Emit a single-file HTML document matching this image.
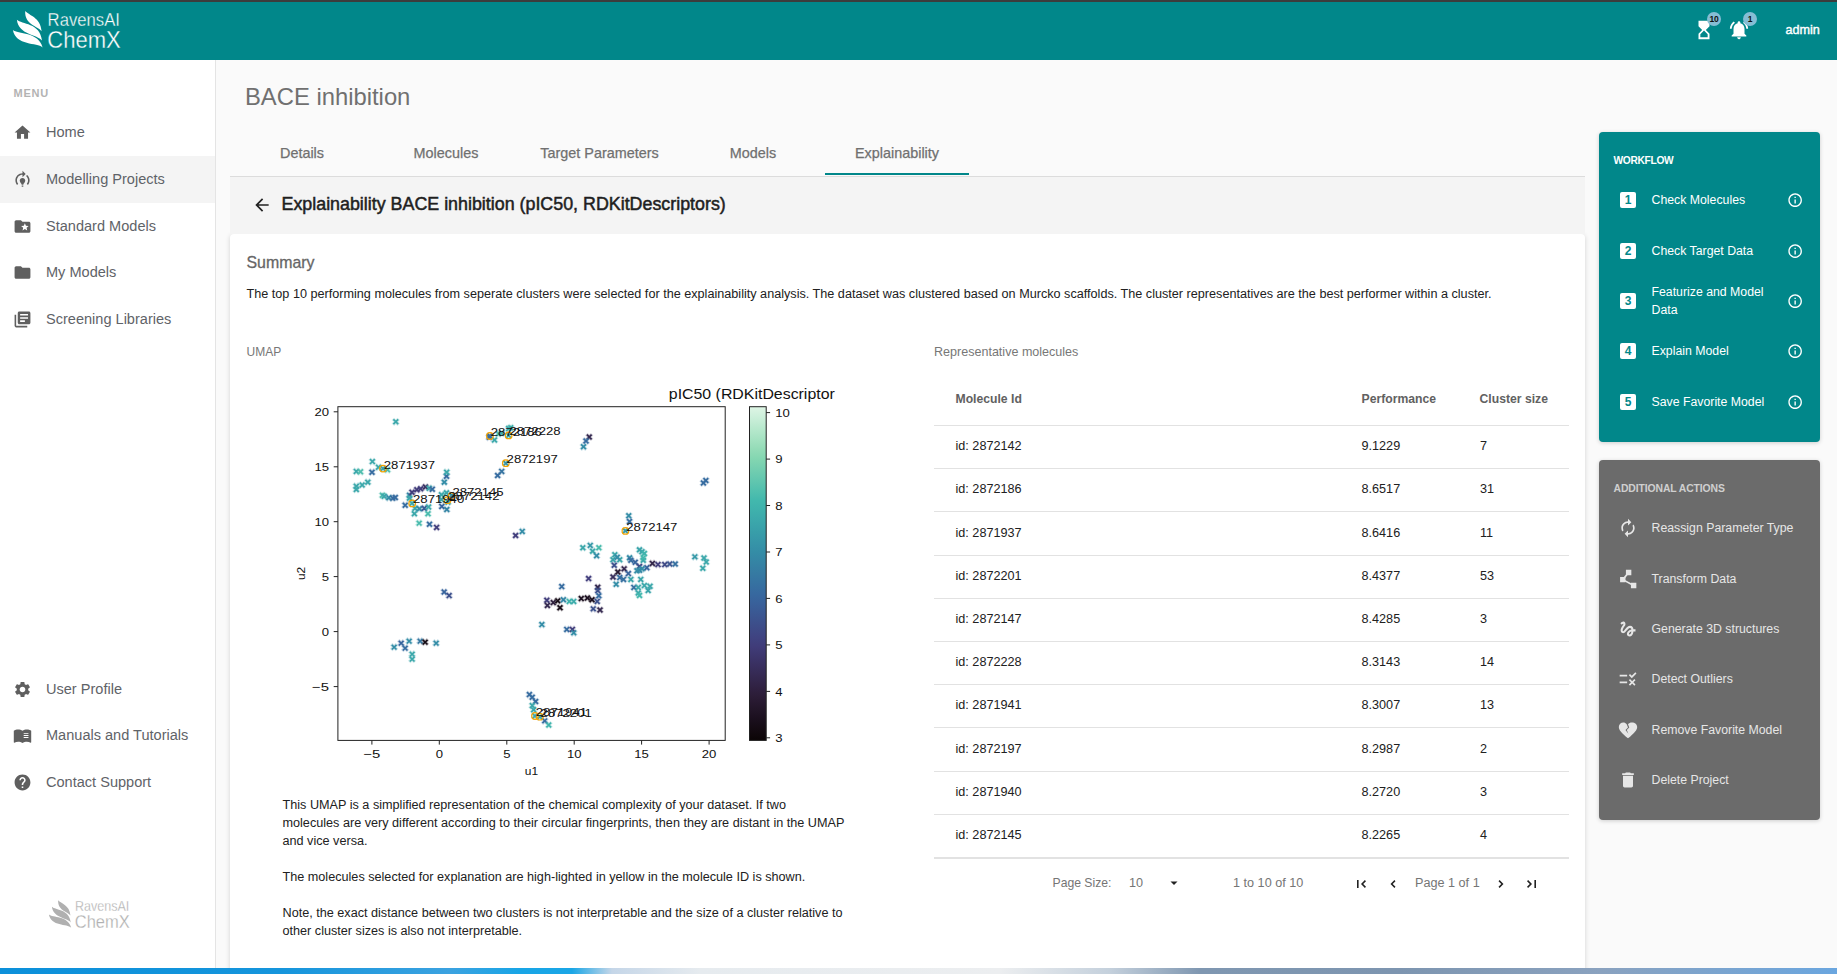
<!DOCTYPE html>
<html><head><meta charset="utf-8">
<style>
*{box-sizing:border-box;margin:0;padding:0}
html,body{width:1837px;height:974px;overflow:hidden;background:#fafafa;font-family:"Liberation Sans",sans-serif;position:relative}
.a{position:absolute;white-space:nowrap}
#topline{left:0;top:0;width:1837px;height:2px;background:#3c3c3c}
#header{left:0;top:2px;width:1837px;height:58px;background:#01878a}
#sidebar{left:0;top:60px;width:216px;height:908px;background:#fff;border-right:1px solid #e4e4e4}
.nav{left:0;width:215px;height:47px}
.nav .t{position:absolute;left:46px;top:0;line-height:47px;font-size:14.55px;color:#5f6368}
.nav svg{position:absolute;left:13px;top:14px;width:19px;height:19px;fill:#5f5f5f}
.tab{top:133px;height:42px;line-height:40px;font-size:14.4px;color:#707070;-webkit-text-stroke:0.25px #707070;text-align:center}
#card{left:230px;top:234px;width:1355px;height:760px;background:#fff;border-radius:4px 4px 0 0;box-shadow:0 1px 5px rgba(0,0,0,.16)}
#cardhead{left:230px;top:177px;width:1355px;height:57px;background:#f4f4f4}
.p{font-size:12.65px;color:#212121}
.th{font-size:12.2px;color:#616161;font-weight:bold}
.td{font-size:12.65px;color:#212121}
.hl{left:934px;width:635px;height:1px;background:#e2e2e2}
#wf{left:1599px;top:132px;width:221px;height:310px;background:#01878a;border-radius:4px;box-shadow:0 1px 4px rgba(0,0,0,.18)}
#aa{left:1599px;top:460px;width:221px;height:360px;background:#6b6b6b;border-radius:4px;box-shadow:0 1px 4px rgba(0,0,0,.18)}
.wft{font-size:12.3px;color:#fff}
.aat{font-size:12.3px;color:#e6e6e6}
.ic{position:absolute}
#bottombar{left:0;top:968px;width:1837px;height:6px;background:linear-gradient(90deg,#0c90da 0px,#1595dc 280px,#3ba2e0 450px,#18a5e6 520px,#1aa6e6 572px,#c5d6e8 612px,#e6ebef 700px,#eceef0 1000px,#c4d0dc 1110px,#7f97b1 1200px,#7d95b0 1400px,#8aa2bf 1600px,#6aa6df 1837px)}
</style></head><body>
<div class="a" id="topline"></div>
<div class="a" id="header"></div>
<div class="a" id="sidebar"></div>
<!--HDR-->
<svg class="a" style="left:0;top:0" width="140" height="60" viewBox="0 0 140 60"><g fill="#fff" stroke="#01878a" stroke-width="0"><g id="lg">
<path d="M25.2 10.9 C29 15.5, 40.5 17, 41.6 31.2 C37.5 25.5, 24.5 25, 25.2 10.9 Z"/>
<path d="M16.9 19.8 C21.5 24.5, 40 22.5, 42 40.6 C37.5 34.5, 18.5 35, 16.9 19.8 Z"/>
<path d="M12.9 30.1 C17.5 34.5, 38.5 31.5, 42.6 47.5 C37.5 42.5, 15.5 46, 12.9 30.1 Z"/>
<text stroke-width="0.35" x="47.6" y="25.5" font-size="19.2" textLength="72.4" lengthAdjust="spacingAndGlyphs" font-family="Liberation Sans">RavensAI</text>
<text stroke-width="0.35" x="47.3" y="47.6" font-size="24" textLength="73.5" lengthAdjust="spacingAndGlyphs" font-family="Liberation Sans">ChemX</text>
</g></g></svg>
<svg class="a" style="left:0;top:880px" width="215" height="60" viewBox="0 880 215 60"><g fill="#b0b0b0" stroke="#fff" stroke-width="0" transform="translate(39.25 892) scale(.75)"><g >
<path d="M25.2 10.9 C29 15.5, 40.5 17, 41.6 31.2 C37.5 25.5, 24.5 25, 25.2 10.9 Z"/>
<path d="M16.9 19.8 C21.5 24.5, 40 22.5, 42 40.6 C37.5 34.5, 18.5 35, 16.9 19.8 Z"/>
<path d="M12.9 30.1 C17.5 34.5, 38.5 31.5, 42.6 47.5 C37.5 42.5, 15.5 46, 12.9 30.1 Z"/>
<text stroke-width="0.35" x="47.6" y="25.5" font-size="19.2" textLength="72.4" lengthAdjust="spacingAndGlyphs" font-family="Liberation Sans">RavensAI</text>
<text stroke-width="0.35" x="47.3" y="47.6" font-size="24" textLength="73.5" lengthAdjust="spacingAndGlyphs" font-family="Liberation Sans">ChemX</text>
</g></g></svg>
<svg class="a" style="left:1692.5px;top:19px" width="22" height="22" viewBox="0 0 24 24" fill="#fff"><path d="M6 2l.01 6L10 12l-3.99 4.01L6 22h12v-6l-4-4 4-3.99V2H6zm10 14.5V20H8v-3.5l4-4 4 4z"/></svg>
<div class="a" style="left:1707px;top:12px;width:14px;height:14px;border-radius:7px;background:#86bdd4;color:#111;font-size:8.5px;font-weight:bold;text-align:center;line-height:14px;letter-spacing:-0.3px">10</div>
<svg class="a" style="left:1728px;top:19px" width="22" height="22" viewBox="0 0 24 24" fill="#fff"><path d="M7.58 4.08L6.15 2.65C3.75 4.48 2.17 7.3 2.03 10.5h2c.15-2.65 1.51-4.97 3.55-6.42zm12.39 6.42h2c-.15-3.2-1.73-6.02-4.12-7.85l-1.42 1.43c2.02 1.45 3.39 3.77 3.54 6.42zM18 11c0-3.07-1.64-5.64-4.5-6.32V4c0-.83-.67-1.5-1.5-1.5s-1.5.67-1.5 1.5v.68C7.63 5.36 6 7.92 6 11v5l-2 2v1h16v-1l-2-2v-5zm-6 11c.14 0 .27-.01.4-.04.65-.14 1.18-.58 1.44-1.18.1-.24.15-.5.15-.78h-4c.01 1.1.9 2 2.01 2z"/></svg>
<div class="a" style="left:1743px;top:12px;width:14px;height:14px;border-radius:7px;background:#86bdd4;color:#111;font-size:8.5px;font-weight:bold;text-align:center;line-height:14px">1</div>
<div class="a" style="left:1785.5px;top:22px;font-size:12.6px;color:#fff;line-height:16px;-webkit-text-stroke:0.4px #fff">admin</div>
<!--/HDR-->


<!-- sidebar -->
<div class="a" style="left:13.5px;top:86px;font-size:11px;font-weight:bold;color:#b3b3b3;letter-spacing:0.75px;line-height:14px">MENU</div>
<div class="a nav" style="top:108.5px"><svg viewBox="0 0 24 24"><path d="M10 20v-6h4v6h5v-8h3L12 3 2 12h3v8z"/></svg><span class="t">Home</span></div>
<div class="a nav" style="top:156px;background:#f4f4f4"><svg viewBox="0 0 24 24"><path d="M15.5 13.5c0 2-2.5 3.5-2.5 5h-2c0-1.5-2.5-3-2.5-5 0-1.93 1.57-3.5 3.5-3.5s3.5 1.57 3.5 3.5zM13 19.5h-2V21h2v-1.5zm6-6.5c0 1.68-.59 3.21-1.58 4.42l1.42 1.420C20.18 17.27 21 15.23 21 13c0-2.74-1.230-5.19-3.16-6.84l-1.42 1.42C17.99 8.86 19 10.82 19 13zm-3-8l-4-4v3c-4.97 0-9 4.03-9 9 0 2.23.82 4.27 2.16 5.84l1.42-1.42C5.59 16.21 5 14.68 5 13c0-3.86 3.14-7 7-7v3l4-4z"/></svg><span class="t">Modelling Projects</span></div>
<div class="a nav" style="top:203px"><svg viewBox="0 0 24 24"><path d="M20 6h-8l-2-2H4c-1.1 0-2 .9-2 2v12c0 1.1.9 2 2 2h16c1.1 0 2-.9 2-2V8c0-1.1-.9-2-2-2zm-2.06 11L15 15.28 12.06 17l.78-3.33-2.59-2.24 3.41-.29L15 8l1.34 3.14 3.41.29-2.59 2.24.78 3.33z"/></svg><span class="t">Standard Models</span></div>
<div class="a nav" style="top:249px"><svg viewBox="0 0 24 24"><path d="M10 4H4c-1.1 0-1.99.9-1.990 2L2 18c0 1.1.9 2 2 2h16c1.1 0 2-.9 2-2V8c0-1.1-.9-2-2-2h-8l-2-2z"/></svg><span class="t">My Models</span></div>
<div class="a nav" style="top:296px"><svg viewBox="0 0 24 24"><path d="M4 6H2v14c0 1.1.9 2 2 2h14v-2H4V6zm16-4H8c-1.1 0-2 .9-2 2v12c0 1.1.9 2 2 2h12c1.1 0 2-.9 2-2V4c0-1.1-.9-2-2-2zm-1 9H9V9h10v2zm-4 4H9v-2h6v2zm4-8H9V5h10v2z"/></svg><span class="t">Screening Libraries</span></div>

<div class="a nav" style="top:666px"><svg viewBox="0 0 24 24"><path d="M19.14 12.94c.04-.3.06-.61.06-.94 0-.32-.02-.64-.07-.94l2.03-1.58c.18-.14.23-.41.12-.61l-1.92-3.32c-.12-.22-.37-.29-.59-.22l-2.39.96c-.5-.38-1.03-.7-1.62-.94l-.36-2.54c-.04-.24-.24-.41-.48-.41h-3.84c-.24 0-.43.17-.47.41l-.36 2.54c-.59.24-1.13.57-1.62.94l-2.39-.96c-.22-.08-.47 0-.59.22L2.74 8.87c-.12.21-.08.47.12.61l2.03 1.58c-.05.3-.09.63-.09.94s.02.64.07.94l-2.03 1.580c-.18.14-.23.41-.12.61l1.92 3.32c.12.22.37.29.59.22l2.39-.96c.5.38 1.03.7 1.62.94l.36 2.54c.05.24.24.41.48.41h3.84c.24 0 .44-.17.47-.41l.36-2.54c.59-.24 1.13-.56 1.62-.94l2.39.96c.22.08.47 0 .59-.22l1.92-3.32c.12-.22.07-.47-.12-.61l-2.01-1.58zM12 15.6c-1.98 0-3.6-1.62-3.6-3.6s1.62-3.6 3.6-3.6 3.6 1.62 3.6 3.6-1.62 3.6-3.6 3.6z"/></svg><span class="t">User Profile</span></div>
<div class="a nav" style="top:712px"><svg viewBox="0 0 24 24"><path d="M21 5c-1.11-.35-2.33-.5-3.5-.5-1.95 0-4.05.4-5.5 1.5-1.45-1.1-3.55-1.5-5.5-1.5S2.45 4.9 1 6v14.65c0 .25.25.5.5.5.1 0 .15-.05.25-.05C3.1 20.45 5.05 20 6.5 20c1.95 0 4.05.4 5.5 1.5 1.350-.85 3.8-1.5 5.5-1.5 1.65 0 3.35.3 4.75 1.05.1.05.15.05.25.05.25 0 .5-.25.5-.5V6c-.6-.45-1.25-.75-2-1z"/><path fill="#fff" d="M13.5 9h6v1h-6zM13.5 11.5h6v1h-6zM13.5 14h6v1h-6z"/></svg><span class="t">Manuals and Tutorials</span></div>
<div class="a nav" style="top:759px"><svg viewBox="0 0 24 24"><path d="M12 2C6.48 2 2 6.48 2 12s4.48 10 10 10 10-4.48 10-10S17.52 2 12 2zm1 17h-2v-2h2v2zm2.07-7.75l-.9.92C13.45 12.9 13 13.5 13 15h-2v-.5c0-1.1.45-2.1 1.170-2.83l1.24-1.26c.37-.36.59-.86.59-1.41 0-1.1-.9-2-2-2s-2 .9-2 2H8c0-2.21 1.79-4 4-4s4 1.79 4 4c0 .88-.36 1.68-.93 2.25z"/></svg><span class="t">Contact Support</span></div>

<!-- main -->
<div class="a" style="left:245px;top:82px;font-size:23.8px;color:#707070;line-height:30px">BACE inhibition</div>
<div class="a" style="left:230px;top:176px;width:1355px;height:1px;background:#dcdcdc"></div>
<div class="a tab" style="left:230px;width:144px">Details</div>
<div class="a tab" style="left:374px;width:144px">Molecules</div>
<div class="a tab" style="left:518px;width:163px">Target Parameters</div>
<div class="a tab" style="left:681px;width:144px">Models</div>
<div class="a tab" style="left:825px;width:144px">Explainability</div>
<div class="a" style="left:825px;top:173px;width:144px;height:2px;background:#01878a"></div>

<div class="a" id="card"></div>
<div class="a" id="cardhead"></div>
<div class="a" style="left:281.5px;top:193px;font-size:17.85px;color:#1f1f1f;-webkit-text-stroke:0.5px #1f1f1f;line-height:22px">Explainability BACE inhibition (pIC50, RDKitDescriptors)</div>
<svg class="a" style="left:252px;top:195px" width="20" height="20" viewBox="0 0 24 24"><path fill="#222" d="M20 11H7.83l5.59-5.59L12 4l-8 8 8 8 1.41-1.41L7.83 13H20v-2z"/></svg>

<div class="a" style="left:246.5px;top:253px;font-size:15.9px;color:#666;-webkit-text-stroke:0.3px #666;line-height:20px">Summary</div>
<div class="a p" style="left:246.5px;top:286px;line-height:16px">The top 10 performing molecules from seperate clusters were selected for the explainability analysis. The dataset was clustered based on Murcko scaffolds. The cluster representatives are the best performer within a cluster.</div>
<div class="a" style="left:246.5px;top:344px;font-size:12px;color:#777;line-height:16px">UMAP</div>
<div class="a" style="left:934px;top:344px;font-size:12.55px;color:#777;line-height:16px">Representative molecules</div>

<!--PLOT-->
<svg class="a" style="left:0;top:0" width="1837" height="974" viewBox="0 0 1837 974" font-family="Liberation Sans">
<g fill="none"><path d="M392.9 418.9L398.7 424.7M392.9 424.7L398.7 418.9" stroke="#3ca8ab" stroke-width="3.4" opacity="0.25"/><path d="M393.4 419.4L398.2 424.2M393.4 424.2L398.2 419.4" stroke="#3ca8ab" stroke-width="1.75"/><path d="M369.5 458.8L375.2 464.5M369.5 464.5L375.2 458.8" stroke="#3ca8ab" stroke-width="3.4" opacity="0.25"/><path d="M370.0 459.2L374.8 464.0M370.0 464.0L374.8 459.2" stroke="#3ca8ab" stroke-width="1.75"/><path d="M353.4 468.5L359.2 474.2M353.4 474.2L359.2 468.5" stroke="#3ca8ab" stroke-width="3.4" opacity="0.25"/><path d="M353.9 469.0L358.7 473.8M353.9 473.8L358.7 469.0" stroke="#3ca8ab" stroke-width="1.75"/><path d="M357.6 468.9L363.4 474.7M357.6 474.7L363.4 468.9" stroke="#50beae" stroke-width="3.4" opacity="0.25"/><path d="M358.1 469.4L362.9 474.2M358.1 474.2L362.9 469.4" stroke="#50beae" stroke-width="1.75"/><path d="M369.1 469.3L374.9 475.1M369.1 475.1L374.9 469.3" stroke="#366ca0" stroke-width="3.4" opacity="0.25"/><path d="M369.6 469.8L374.4 474.6M369.6 474.6L374.4 469.8" stroke="#366ca0" stroke-width="1.75"/><path d="M375.6 464.4L381.4 470.2M375.6 470.2L381.4 464.4" stroke="#3ca8ab" stroke-width="3.4" opacity="0.25"/><path d="M376.1 464.9L380.9 469.7M376.1 469.7L380.9 464.9" stroke="#3ca8ab" stroke-width="1.75"/><path d="M384.6 466.9L390.4 472.7M384.6 472.7L390.4 466.9" stroke="#50beae" stroke-width="3.4" opacity="0.25"/><path d="M385.1 467.4L389.9 472.2M385.1 472.2L389.9 467.4" stroke="#50beae" stroke-width="1.75"/><path d="M380.1 465.8L385.9 471.5M380.1 471.5L385.9 465.8" stroke="#39a0aa" stroke-width="3.4" opacity="0.25"/><path d="M380.6 466.2L385.4 471.0M380.6 471.0L385.4 466.2" stroke="#39a0aa" stroke-width="1.75"/><path d="M353.4 483.3L359.2 489.1M353.4 489.1L359.2 483.3" stroke="#3ca8ab" stroke-width="3.4" opacity="0.25"/><path d="M353.9 483.8L358.7 488.6M353.9 488.6L358.7 483.8" stroke="#3ca8ab" stroke-width="1.75"/><path d="M353.4 486.6L359.2 492.4M353.4 492.4L359.2 486.6" stroke="#3ca8ab" stroke-width="3.4" opacity="0.25"/><path d="M353.9 487.1L358.7 491.9M353.9 491.9L358.7 487.1" stroke="#3ca8ab" stroke-width="1.75"/><path d="M359.2 482.1L365.0 487.9M359.2 487.9L365.0 482.1" stroke="#3ca8ab" stroke-width="3.4" opacity="0.25"/><path d="M359.8 482.6L364.5 487.4M359.8 487.4L364.5 482.6" stroke="#3ca8ab" stroke-width="1.75"/><path d="M364.9 479.2L370.7 485.0M364.9 485.0L370.7 479.2" stroke="#3ca8ab" stroke-width="3.4" opacity="0.25"/><path d="M365.4 479.8L370.2 484.5M365.4 484.5L370.2 479.8" stroke="#3ca8ab" stroke-width="1.75"/><path d="M379.5 492.4L385.2 498.2M379.5 498.2L385.2 492.4" stroke="#50beae" stroke-width="3.4" opacity="0.25"/><path d="M380.0 492.9L384.8 497.7M380.0 497.7L384.8 492.9" stroke="#50beae" stroke-width="1.75"/><path d="M381.3 493.4L387.1 499.2M381.3 499.2L387.1 493.4" stroke="#3ca8ab" stroke-width="3.4" opacity="0.25"/><path d="M381.8 493.9L386.6 498.7M381.8 498.7L386.6 493.9" stroke="#3ca8ab" stroke-width="1.75"/><path d="M386.0 494.9L391.8 500.7M386.0 500.7L391.8 494.9" stroke="#348da7" stroke-width="3.4" opacity="0.25"/><path d="M386.5 495.4L391.2 500.2M386.5 500.2L391.2 495.4" stroke="#348da7" stroke-width="1.75"/><path d="M390.0 495.2L395.8 501.0M390.0 501.0L395.8 495.2" stroke="#366ca0" stroke-width="3.4" opacity="0.25"/><path d="M390.5 495.8L395.2 500.5M390.5 500.5L395.2 495.8" stroke="#366ca0" stroke-width="1.75"/><path d="M392.4 494.6L398.2 500.4M392.4 500.4L398.2 494.6" stroke="#366ca0" stroke-width="3.4" opacity="0.25"/><path d="M392.9 495.1L397.7 499.9M392.9 499.9L397.7 495.1" stroke="#366ca0" stroke-width="1.75"/><path d="M406.6 492.4L412.4 498.2M406.6 498.2L412.4 492.4" stroke="#3585a5" stroke-width="3.4" opacity="0.25"/><path d="M407.1 492.9L411.9 497.7M407.1 497.7L411.9 492.9" stroke="#3585a5" stroke-width="1.75"/><path d="M406.6 495.2L412.4 501.0M406.6 501.0L412.4 495.2" stroke="#3ca8ab" stroke-width="3.4" opacity="0.25"/><path d="M407.1 495.8L411.9 500.5M407.1 500.5L411.9 495.8" stroke="#3ca8ab" stroke-width="1.75"/><path d="M409.1 489.4L414.9 495.2M409.1 495.2L414.9 489.4" stroke="#413d7b" stroke-width="3.4" opacity="0.25"/><path d="M409.6 489.9L414.4 494.7M409.6 494.7L414.4 489.9" stroke="#413d7b" stroke-width="1.75"/><path d="M414.0 486.9L419.8 492.7M414.0 492.7L419.8 486.9" stroke="#413d7b" stroke-width="3.4" opacity="0.25"/><path d="M414.5 487.4L419.2 492.2M414.5 492.2L419.2 487.4" stroke="#413d7b" stroke-width="1.75"/><path d="M417.8 486.0L423.5 491.8M417.8 491.8L423.5 486.0" stroke="#413d7b" stroke-width="3.4" opacity="0.25"/><path d="M418.2 486.5L423.0 491.2M418.2 491.2L423.0 486.5" stroke="#413d7b" stroke-width="1.75"/><path d="M422.6 484.1L428.4 489.9M422.6 489.9L428.4 484.1" stroke="#3a3162" stroke-width="3.4" opacity="0.25"/><path d="M423.1 484.6L427.9 489.4M423.1 489.4L427.9 484.6" stroke="#3a3162" stroke-width="1.75"/><path d="M426.3 485.3L432.1 491.1M426.3 491.1L432.1 485.3" stroke="#3ca8ab" stroke-width="3.4" opacity="0.25"/><path d="M426.8 485.8L431.6 490.6M426.8 490.6L431.6 485.8" stroke="#3ca8ab" stroke-width="1.75"/><path d="M429.4 486.3L435.2 492.1M429.4 492.1L435.2 486.3" stroke="#366ca0" stroke-width="3.4" opacity="0.25"/><path d="M429.9 486.8L434.7 491.6M429.9 491.6L434.7 486.8" stroke="#366ca0" stroke-width="1.75"/><path d="M402.3 502.3L408.1 508.1M402.3 508.1L408.1 502.3" stroke="#366ca0" stroke-width="3.4" opacity="0.25"/><path d="M402.8 502.8L407.6 507.6M402.8 507.6L407.6 502.8" stroke="#366ca0" stroke-width="1.75"/><path d="M409.1 500.4L414.9 506.2M409.1 506.2L414.9 500.4" stroke="#3ca8ab" stroke-width="3.4" opacity="0.25"/><path d="M409.6 500.9L414.4 505.7M409.6 505.7L414.4 500.9" stroke="#3ca8ab" stroke-width="1.75"/><path d="M412.1 505.4L417.9 511.2M412.1 511.2L417.9 505.4" stroke="#3ca8ab" stroke-width="3.4" opacity="0.25"/><path d="M412.6 505.9L417.4 510.7M412.6 510.7L417.4 505.9" stroke="#3ca8ab" stroke-width="1.75"/><path d="M416.5 506.0L422.2 511.8M416.5 511.8L422.2 506.0" stroke="#348da7" stroke-width="3.4" opacity="0.25"/><path d="M417.0 506.5L421.8 511.2M417.0 511.2L421.8 506.5" stroke="#348da7" stroke-width="1.75"/><path d="M421.4 505.4L427.2 511.2M421.4 511.2L427.2 505.4" stroke="#395c96" stroke-width="3.4" opacity="0.25"/><path d="M421.9 505.9L426.7 510.7M421.9 510.7L426.7 505.9" stroke="#395c96" stroke-width="1.75"/><path d="M425.8 504.1L431.5 509.9M425.8 509.9L431.5 504.1" stroke="#3ca8ab" stroke-width="3.4" opacity="0.25"/><path d="M426.2 504.6L431.0 509.4M426.2 509.4L431.0 504.6" stroke="#3ca8ab" stroke-width="1.75"/><path d="M411.5 510.9L417.2 516.6M411.5 516.6L417.2 510.9" stroke="#3ca8ab" stroke-width="3.4" opacity="0.25"/><path d="M412.0 511.4L416.8 516.1M412.0 516.1L416.8 511.4" stroke="#3ca8ab" stroke-width="1.75"/><path d="M425.1 510.9L430.9 516.6M425.1 516.6L430.9 510.9" stroke="#49bbad" stroke-width="3.4" opacity="0.25"/><path d="M425.6 511.4L430.4 516.1M425.6 516.1L430.4 511.4" stroke="#49bbad" stroke-width="1.75"/><path d="M416.2 520.2L422.0 526.0M416.2 526.0L422.0 520.2" stroke="#49bbad" stroke-width="3.4" opacity="0.25"/><path d="M416.8 520.8L421.5 525.5M416.8 525.5L421.5 520.8" stroke="#49bbad" stroke-width="1.75"/><path d="M426.6 521.4L432.4 527.1M426.6 527.1L432.4 521.4" stroke="#366ca0" stroke-width="3.4" opacity="0.25"/><path d="M427.1 521.9L431.9 526.6M427.1 526.6L431.9 521.9" stroke="#366ca0" stroke-width="1.75"/><path d="M433.8 524.5L439.5 530.2M433.8 530.2L439.5 524.5" stroke="#413d7b" stroke-width="3.4" opacity="0.25"/><path d="M434.2 525.0L439.0 529.8M434.2 529.8L439.0 525.0" stroke="#413d7b" stroke-width="1.75"/><path d="M441.4 479.2L447.2 485.0M441.4 485.0L447.2 479.2" stroke="#348da7" stroke-width="3.4" opacity="0.25"/><path d="M441.9 479.8L446.7 484.5M441.9 484.5L446.7 479.8" stroke="#348da7" stroke-width="1.75"/><path d="M443.6 473.3L449.4 479.1M443.6 479.1L449.4 473.3" stroke="#366ca0" stroke-width="3.4" opacity="0.25"/><path d="M444.1 473.8L448.9 478.6M444.1 478.6L448.9 473.8" stroke="#366ca0" stroke-width="1.75"/><path d="M443.8 469.3L449.6 475.1M443.8 475.1L449.6 469.3" stroke="#3ca8ab" stroke-width="3.4" opacity="0.25"/><path d="M444.3 469.8L449.1 474.6M444.3 474.6L449.1 469.8" stroke="#3ca8ab" stroke-width="1.75"/><path d="M443.6 490.0L449.4 495.8M443.6 495.8L449.4 490.0" stroke="#3ca8ab" stroke-width="3.4" opacity="0.25"/><path d="M444.1 490.5L448.9 495.2M444.1 495.2L448.9 490.5" stroke="#3ca8ab" stroke-width="1.75"/><path d="M438.6 491.8L444.4 497.6M438.6 497.6L444.4 491.8" stroke="#3ca8ab" stroke-width="3.4" opacity="0.25"/><path d="M439.1 492.3L443.9 497.1M439.1 497.1L443.9 492.3" stroke="#3ca8ab" stroke-width="1.75"/><path d="M438.6 496.8L444.4 502.5M438.6 502.5L444.4 496.8" stroke="#39a0aa" stroke-width="3.4" opacity="0.25"/><path d="M439.1 497.2L443.9 502.0M439.1 502.0L443.9 497.2" stroke="#39a0aa" stroke-width="1.75"/><path d="M448.8 492.4L454.6 498.2M448.8 498.2L454.6 492.4" stroke="#348da7" stroke-width="3.4" opacity="0.25"/><path d="M449.3 492.9L454.1 497.7M449.3 497.7L454.1 492.9" stroke="#348da7" stroke-width="1.75"/><path d="M445.1 499.2L450.9 505.0M445.1 505.0L450.9 499.2" stroke="#3ca8ab" stroke-width="3.4" opacity="0.25"/><path d="M445.6 499.8L450.4 504.5M445.6 504.5L450.4 499.8" stroke="#3ca8ab" stroke-width="1.75"/><path d="M438.9 503.5L444.7 509.2M438.9 509.2L444.7 503.5" stroke="#37649d" stroke-width="3.4" opacity="0.25"/><path d="M439.4 504.0L444.2 508.8M439.4 508.8L444.2 504.0" stroke="#37649d" stroke-width="1.75"/><path d="M443.9 506.6L449.7 512.4M443.9 512.4L449.7 506.6" stroke="#3585a5" stroke-width="3.4" opacity="0.25"/><path d="M444.4 507.1L449.2 511.9M444.4 511.9L449.2 507.1" stroke="#3585a5" stroke-width="1.75"/><path d="M487.0 433.1L492.8 438.9M487.0 438.9L492.8 433.1" stroke="#366ca0" stroke-width="3.4" opacity="0.25"/><path d="M487.5 433.6L492.2 438.4M487.5 438.4L492.2 433.6" stroke="#366ca0" stroke-width="1.75"/><path d="M486.3 434.4L492.1 440.2M486.3 440.2L492.1 434.4" stroke="#366ca0" stroke-width="3.4" opacity="0.25"/><path d="M486.8 434.9L491.6 439.7M486.8 439.7L491.6 434.9" stroke="#366ca0" stroke-width="1.75"/><path d="M491.6 437.1L497.4 442.9M491.6 442.9L497.4 437.1" stroke="#3ca8ab" stroke-width="3.4" opacity="0.25"/><path d="M492.1 437.6L496.9 442.4M492.1 442.4L496.9 437.6" stroke="#3ca8ab" stroke-width="1.75"/><path d="M495.6 431.0L501.4 436.8M495.6 436.8L501.4 431.0" stroke="#49bbad" stroke-width="3.4" opacity="0.25"/><path d="M496.1 431.5L500.9 436.2M496.1 436.2L500.9 431.5" stroke="#49bbad" stroke-width="1.75"/><path d="M498.8 430.3L504.5 436.1M498.8 436.1L504.5 430.3" stroke="#3ca8ab" stroke-width="3.4" opacity="0.25"/><path d="M499.2 430.8L504.0 435.6M499.2 435.6L504.0 430.8" stroke="#3ca8ab" stroke-width="1.75"/><path d="M505.8 432.5L511.5 438.2M505.8 438.2L511.5 432.5" stroke="#3ca8ab" stroke-width="3.4" opacity="0.25"/><path d="M506.2 433.0L511.0 437.8M506.2 437.8L511.0 433.0" stroke="#3ca8ab" stroke-width="1.75"/><path d="M505.8 425.8L511.5 431.5M505.8 431.5L511.5 425.8" stroke="#3ca8ab" stroke-width="3.4" opacity="0.25"/><path d="M506.2 426.2L511.0 431.0M506.2 431.0L511.0 426.2" stroke="#3ca8ab" stroke-width="1.75"/><path d="M507.9 424.8L513.6 430.6M507.9 430.6L513.6 424.8" stroke="#3eb0ac" stroke-width="3.4" opacity="0.25"/><path d="M508.4 425.3L513.1 430.1M508.4 430.1L513.1 425.3" stroke="#3eb0ac" stroke-width="1.75"/><path d="M502.9 460.3L508.7 466.1M502.9 466.1L508.7 460.3" stroke="#3695a8" stroke-width="3.4" opacity="0.25"/><path d="M503.4 460.8L508.2 465.6M503.4 465.6L508.2 460.8" stroke="#3695a8" stroke-width="1.75"/><path d="M498.8 468.5L504.6 474.2M498.8 474.2L504.6 468.5" stroke="#3674a1" stroke-width="3.4" opacity="0.25"/><path d="M499.3 469.0L504.1 473.8M499.3 473.8L504.1 469.0" stroke="#3674a1" stroke-width="1.75"/><path d="M494.8 472.6L500.5 478.4M494.8 478.4L500.5 472.6" stroke="#366ca0" stroke-width="3.4" opacity="0.25"/><path d="M495.2 473.1L500.0 477.9M495.2 477.9L500.0 473.1" stroke="#366ca0" stroke-width="1.75"/><path d="M512.8 532.6L518.5 538.4M512.8 538.4L518.5 532.6" stroke="#413d7b" stroke-width="3.4" opacity="0.25"/><path d="M513.2 533.1L518.0 537.9M513.2 537.9L518.0 533.1" stroke="#413d7b" stroke-width="1.75"/><path d="M519.4 528.5L525.1 534.2M519.4 534.2L525.1 528.5" stroke="#348da7" stroke-width="3.4" opacity="0.25"/><path d="M519.9 529.0L524.6 533.8M519.9 533.8L524.6 529.0" stroke="#348da7" stroke-width="1.75"/><path d="M586.4 434.1L592.1 439.9M586.4 439.9L592.1 434.1" stroke="#34284f" stroke-width="3.4" opacity="0.25"/><path d="M586.9 434.6L591.6 439.4M586.9 439.4L591.6 434.6" stroke="#34284f" stroke-width="1.75"/><path d="M583.1 438.1L588.9 443.9M583.1 443.9L588.9 438.1" stroke="#366ca0" stroke-width="3.4" opacity="0.25"/><path d="M583.6 438.6L588.4 443.4M583.6 443.4L588.4 438.6" stroke="#366ca0" stroke-width="1.75"/><path d="M580.6 443.9L586.4 449.7M580.6 449.7L586.4 443.9" stroke="#348da7" stroke-width="3.4" opacity="0.25"/><path d="M581.1 444.4L585.9 449.2M581.1 449.2L585.9 444.4" stroke="#348da7" stroke-width="1.75"/><path d="M703.0 477.6L708.8 483.4M703.0 483.4L708.8 477.6" stroke="#366ca0" stroke-width="3.4" opacity="0.25"/><path d="M703.5 478.1L708.2 482.9M703.5 482.9L708.2 478.1" stroke="#366ca0" stroke-width="1.75"/><path d="M700.5 480.1L706.2 485.9M700.5 485.9L706.2 480.1" stroke="#366ca0" stroke-width="3.4" opacity="0.25"/><path d="M701.0 480.6L705.8 485.4M701.0 485.4L705.8 480.6" stroke="#366ca0" stroke-width="1.75"/><path d="M625.9 512.9L631.6 518.6M625.9 518.6L631.6 512.9" stroke="#348da7" stroke-width="3.4" opacity="0.25"/><path d="M626.4 513.4L631.1 518.1M626.4 518.1L631.1 513.4" stroke="#348da7" stroke-width="1.75"/><path d="M626.6 518.8L632.4 524.5M626.6 524.5L632.4 518.8" stroke="#366ca0" stroke-width="3.4" opacity="0.25"/><path d="M627.1 519.2L631.9 524.0M627.1 524.0L631.9 519.2" stroke="#366ca0" stroke-width="1.75"/><path d="M622.5 528.0L628.2 533.8M622.5 533.8L628.2 528.0" stroke="#3799a8" stroke-width="3.4" opacity="0.25"/><path d="M623.0 528.5L627.8 533.2M623.0 533.2L627.8 528.5" stroke="#3799a8" stroke-width="1.75"/><path d="M580.0 544.9L585.8 550.6M580.0 550.6L585.8 544.9" stroke="#3ca8ab" stroke-width="3.4" opacity="0.25"/><path d="M580.5 545.4L585.2 550.1M580.5 550.1L585.2 545.4" stroke="#3ca8ab" stroke-width="1.75"/><path d="M587.4 542.5L593.1 548.2M587.4 548.2L593.1 542.5" stroke="#3799a8" stroke-width="3.4" opacity="0.25"/><path d="M587.9 543.0L592.6 547.8M587.9 547.8L592.6 543.0" stroke="#3799a8" stroke-width="1.75"/><path d="M596.0 544.9L601.8 550.6M596.0 550.6L601.8 544.9" stroke="#49bbad" stroke-width="3.4" opacity="0.25"/><path d="M596.5 545.4L601.2 550.1M596.5 550.1L601.2 545.4" stroke="#49bbad" stroke-width="1.75"/><path d="M589.8 548.2L595.5 554.0M589.8 554.0L595.5 548.2" stroke="#3ca8ab" stroke-width="3.4" opacity="0.25"/><path d="M590.2 548.8L595.0 553.5M590.2 553.5L595.0 548.8" stroke="#3ca8ab" stroke-width="1.75"/><path d="M593.8 552.9L599.5 558.6M593.8 558.6L599.5 552.9" stroke="#348da7" stroke-width="3.4" opacity="0.25"/><path d="M594.2 553.4L599.0 558.1M594.2 558.1L599.0 553.4" stroke="#348da7" stroke-width="1.75"/><path d="M612.0 551.9L617.8 557.6M612.0 557.6L617.8 551.9" stroke="#3ca8ab" stroke-width="3.4" opacity="0.25"/><path d="M612.5 552.4L617.2 557.1M612.5 557.1L617.2 552.4" stroke="#3ca8ab" stroke-width="1.75"/><path d="M610.1 556.9L615.9 562.6M610.1 562.6L615.9 556.9" stroke="#3aa4aa" stroke-width="3.4" opacity="0.25"/><path d="M610.6 557.4L615.4 562.1M610.6 562.1L615.4 557.4" stroke="#3aa4aa" stroke-width="1.75"/><path d="M616.9 556.9L622.6 562.6M616.9 562.6L622.6 556.9" stroke="#3ca8ab" stroke-width="3.4" opacity="0.25"/><path d="M617.4 557.4L622.1 562.1M617.4 562.1L622.1 557.4" stroke="#3ca8ab" stroke-width="1.75"/><path d="M614.4 554.4L620.1 560.1M614.4 560.1L620.1 554.4" stroke="#348da7" stroke-width="3.4" opacity="0.25"/><path d="M614.9 554.9L619.6 559.6M614.9 559.6L619.6 554.9" stroke="#348da7" stroke-width="1.75"/><path d="M611.4 562.4L617.1 568.1M611.4 568.1L617.1 562.4" stroke="#3c508c" stroke-width="3.4" opacity="0.25"/><path d="M611.9 562.9L616.6 567.6M611.9 567.6L616.6 562.9" stroke="#3c508c" stroke-width="1.75"/><path d="M621.2 566.0L627.0 571.8M621.2 571.8L627.0 566.0" stroke="#34284f" stroke-width="3.4" opacity="0.25"/><path d="M621.8 566.5L626.5 571.2M621.8 571.2L626.5 566.5" stroke="#34284f" stroke-width="1.75"/><path d="M615.0 569.1L620.8 574.9M615.0 574.9L620.8 569.1" stroke="#281a32" stroke-width="3.4" opacity="0.25"/><path d="M615.5 569.6L620.2 574.4M615.5 574.4L620.2 569.6" stroke="#281a32" stroke-width="1.75"/><path d="M625.5 570.8L631.2 576.5M625.5 576.5L631.2 570.8" stroke="#37649d" stroke-width="3.4" opacity="0.25"/><path d="M626.0 571.2L630.8 576.0M626.0 576.0L630.8 571.2" stroke="#37649d" stroke-width="1.75"/><path d="M610.1 574.1L615.9 579.9M610.1 579.9L615.9 574.1" stroke="#382e5c" stroke-width="3.4" opacity="0.25"/><path d="M610.6 574.6L615.4 579.4M610.6 579.4L615.4 574.6" stroke="#382e5c" stroke-width="1.75"/><path d="M616.9 574.8L622.6 580.5M616.9 580.5L622.6 574.8" stroke="#366ca0" stroke-width="3.4" opacity="0.25"/><path d="M617.4 575.2L622.1 580.0M617.4 580.0L622.1 575.2" stroke="#366ca0" stroke-width="1.75"/><path d="M613.2 581.4L619.0 587.1M613.2 587.1L619.0 581.4" stroke="#348da7" stroke-width="3.4" opacity="0.25"/><path d="M613.8 581.9L618.5 586.6M613.8 586.6L618.5 581.9" stroke="#348da7" stroke-width="1.75"/><path d="M639.1 548.9L644.9 554.6M639.1 554.6L644.9 548.9" stroke="#3ca8ab" stroke-width="3.4" opacity="0.25"/><path d="M639.6 549.4L644.4 554.1M639.6 554.1L644.4 549.4" stroke="#3ca8ab" stroke-width="1.75"/><path d="M636.6 547.0L642.4 552.8M636.6 552.8L642.4 547.0" stroke="#3aa4aa" stroke-width="3.4" opacity="0.25"/><path d="M637.1 547.5L641.9 552.2M637.1 552.2L641.9 547.5" stroke="#3aa4aa" stroke-width="1.75"/><path d="M641.5 550.6L647.2 556.4M641.5 556.4L647.2 550.6" stroke="#3fb4ad" stroke-width="3.4" opacity="0.25"/><path d="M642.0 551.1L646.8 555.9M642.0 555.9L646.8 551.1" stroke="#3fb4ad" stroke-width="1.75"/><path d="M626.8 555.0L632.5 560.8M626.8 560.8L632.5 555.0" stroke="#348da7" stroke-width="3.4" opacity="0.25"/><path d="M627.2 555.5L632.0 560.2M627.2 560.2L632.0 555.5" stroke="#348da7" stroke-width="1.75"/><path d="M628.0 557.4L633.8 563.1M628.0 563.1L633.8 557.4" stroke="#366ca0" stroke-width="3.4" opacity="0.25"/><path d="M628.5 557.9L633.2 562.6M628.5 562.6L633.2 557.9" stroke="#366ca0" stroke-width="1.75"/><path d="M632.4 559.4L638.1 565.1M632.4 565.1L638.1 559.4" stroke="#37649d" stroke-width="3.4" opacity="0.25"/><path d="M632.9 559.9L637.6 564.6M632.9 564.6L637.6 559.9" stroke="#37649d" stroke-width="1.75"/><path d="M636.6 563.6L642.4 569.4M636.6 569.4L642.4 563.6" stroke="#3e4985" stroke-width="3.4" opacity="0.25"/><path d="M637.1 564.1L641.9 568.9M637.1 568.9L641.9 564.1" stroke="#3e4985" stroke-width="1.75"/><path d="M640.4 557.4L646.1 563.1M640.4 563.1L646.1 557.4" stroke="#3ca8ab" stroke-width="3.4" opacity="0.25"/><path d="M640.9 557.9L645.6 562.6M640.9 562.6L645.6 557.9" stroke="#3ca8ab" stroke-width="1.75"/><path d="M640.4 555.0L646.1 560.8M640.4 560.8L646.1 555.0" stroke="#42b8ad" stroke-width="3.4" opacity="0.25"/><path d="M640.9 555.5L645.6 560.2M640.9 560.2L645.6 555.5" stroke="#42b8ad" stroke-width="1.75"/><path d="M644.0 564.9L649.8 570.6M644.0 570.6L649.8 564.9" stroke="#37649d" stroke-width="3.4" opacity="0.25"/><path d="M644.5 565.4L649.2 570.1M644.5 570.1L649.2 565.4" stroke="#37649d" stroke-width="1.75"/><path d="M636.6 567.4L642.4 573.1M636.6 573.1L642.4 567.4" stroke="#3585a5" stroke-width="3.4" opacity="0.25"/><path d="M637.1 567.9L641.9 572.6M637.1 572.6L641.9 567.9" stroke="#3585a5" stroke-width="1.75"/><path d="M634.1 567.9L639.9 573.6M634.1 573.6L639.9 567.9" stroke="#348da7" stroke-width="3.4" opacity="0.25"/><path d="M634.6 568.4L639.4 573.1M634.6 573.1L639.4 568.4" stroke="#348da7" stroke-width="1.75"/><path d="M639.1 566.0L644.9 571.8M639.1 571.8L644.9 566.0" stroke="#348da7" stroke-width="3.4" opacity="0.25"/><path d="M639.6 566.5L644.4 571.2M639.6 571.2L644.4 566.5" stroke="#348da7" stroke-width="1.75"/><path d="M649.5 560.5L655.2 566.2M649.5 566.2L655.2 560.5" stroke="#322549" stroke-width="3.4" opacity="0.25"/><path d="M650.0 561.0L654.8 565.8M650.0 565.8L654.8 561.0" stroke="#322549" stroke-width="1.75"/><path d="M655.1 561.8L660.9 567.5M655.1 567.5L660.9 561.8" stroke="#413d7b" stroke-width="3.4" opacity="0.25"/><path d="M655.6 562.2L660.4 567.0M655.6 567.0L660.4 562.2" stroke="#413d7b" stroke-width="1.75"/><path d="M661.9 561.8L667.6 567.5M661.9 567.5L667.6 561.8" stroke="#3e4985" stroke-width="3.4" opacity="0.25"/><path d="M662.4 562.2L667.1 567.0M662.4 567.0L667.1 562.2" stroke="#3e4985" stroke-width="1.75"/><path d="M666.9 561.1L672.6 566.9M666.9 566.9L672.6 561.1" stroke="#3b548f" stroke-width="3.4" opacity="0.25"/><path d="M667.4 561.6L672.1 566.4M667.4 566.4L672.1 561.6" stroke="#3b548f" stroke-width="1.75"/><path d="M672.4 561.1L678.1 566.9M672.4 566.9L678.1 561.1" stroke="#3670a0" stroke-width="3.4" opacity="0.25"/><path d="M672.9 561.6L677.6 566.4M672.9 566.4L677.6 561.6" stroke="#3670a0" stroke-width="1.75"/><path d="M628.0 576.5L633.8 582.2M628.0 582.2L633.8 576.5" stroke="#3aa4aa" stroke-width="3.4" opacity="0.25"/><path d="M628.5 577.0L633.2 581.8M628.5 581.8L633.2 577.0" stroke="#3aa4aa" stroke-width="1.75"/><path d="M637.9 576.5L643.6 582.2M637.9 582.2L643.6 576.5" stroke="#3aa4aa" stroke-width="3.4" opacity="0.25"/><path d="M638.4 577.0L643.1 581.8M638.4 581.8L643.1 577.0" stroke="#3aa4aa" stroke-width="1.75"/><path d="M620.6 576.5L626.4 582.2M620.6 582.2L626.4 576.5" stroke="#3670a0" stroke-width="3.4" opacity="0.25"/><path d="M621.1 577.0L625.9 581.8M621.1 581.8L625.9 577.0" stroke="#3670a0" stroke-width="1.75"/><path d="M631.0 584.5L636.8 590.2M631.0 590.2L636.8 584.5" stroke="#3670a0" stroke-width="3.4" opacity="0.25"/><path d="M631.5 585.0L636.2 589.8M631.5 589.8L636.2 585.0" stroke="#3670a0" stroke-width="1.75"/><path d="M635.4 584.5L641.1 590.2M635.4 590.2L641.1 584.5" stroke="#3ca8ab" stroke-width="3.4" opacity="0.25"/><path d="M635.9 585.0L640.6 589.8M635.9 589.8L640.6 585.0" stroke="#3ca8ab" stroke-width="1.75"/><path d="M647.1 583.4L652.9 589.1M647.1 589.1L652.9 583.4" stroke="#3ca8ab" stroke-width="3.4" opacity="0.25"/><path d="M647.6 583.9L652.4 588.6M647.6 588.6L652.4 583.9" stroke="#3ca8ab" stroke-width="1.75"/><path d="M645.2 587.6L651.0 593.4M645.2 593.4L651.0 587.6" stroke="#3aa4aa" stroke-width="3.4" opacity="0.25"/><path d="M645.8 588.1L650.5 592.9M645.8 592.9L650.5 588.1" stroke="#3aa4aa" stroke-width="1.75"/><path d="M641.5 582.8L647.2 588.5M641.5 588.5L647.2 582.8" stroke="#3ca8ab" stroke-width="3.4" opacity="0.25"/><path d="M642.0 583.2L646.8 588.0M642.0 588.0L646.8 583.2" stroke="#3ca8ab" stroke-width="1.75"/><path d="M635.4 590.1L641.1 595.9M635.4 595.9L641.1 590.1" stroke="#3ca8ab" stroke-width="3.4" opacity="0.25"/><path d="M635.9 590.6L640.6 595.4M635.9 595.4L640.6 590.6" stroke="#3ca8ab" stroke-width="1.75"/><path d="M636.6 592.5L642.4 598.2M636.6 598.2L642.4 592.5" stroke="#42b8ad" stroke-width="3.4" opacity="0.25"/><path d="M637.1 593.0L641.9 597.8M637.1 597.8L641.9 593.0" stroke="#42b8ad" stroke-width="1.75"/><path d="M692.0 554.0L697.8 559.8M692.0 559.8L697.8 554.0" stroke="#3799a8" stroke-width="3.4" opacity="0.25"/><path d="M692.5 554.5L697.2 559.2M692.5 559.2L697.2 554.5" stroke="#3799a8" stroke-width="1.75"/><path d="M701.1 555.1L706.9 560.9M701.1 560.9L706.9 555.1" stroke="#3ca8ab" stroke-width="3.4" opacity="0.25"/><path d="M701.6 555.6L706.4 560.4M701.6 560.4L706.4 555.6" stroke="#3ca8ab" stroke-width="1.75"/><path d="M703.4 559.1L709.1 564.9M703.4 564.9L709.1 559.1" stroke="#3ca8ab" stroke-width="3.4" opacity="0.25"/><path d="M703.9 559.6L708.6 564.4M703.9 564.4L708.6 559.6" stroke="#3ca8ab" stroke-width="1.75"/><path d="M700.0 565.4L705.8 571.1M700.0 571.1L705.8 565.4" stroke="#3ca8ab" stroke-width="3.4" opacity="0.25"/><path d="M700.5 565.9L705.2 570.6M700.5 570.6L705.2 565.9" stroke="#3ca8ab" stroke-width="1.75"/><path d="M585.8 575.8L591.5 581.5M585.8 581.5L591.5 575.8" stroke="#413d7b" stroke-width="3.4" opacity="0.25"/><path d="M586.2 576.2L591.0 581.0M586.2 581.0L591.0 576.2" stroke="#413d7b" stroke-width="1.75"/><path d="M558.9 583.8L564.6 589.5M558.9 589.5L564.6 583.8" stroke="#366ca0" stroke-width="3.4" opacity="0.25"/><path d="M559.4 584.2L564.1 589.0M559.4 589.0L564.1 584.2" stroke="#366ca0" stroke-width="1.75"/><path d="M544.0 597.4L549.8 603.1M544.0 603.1L549.8 597.4" stroke="#413d7b" stroke-width="3.4" opacity="0.25"/><path d="M544.5 597.9L549.2 602.6M544.5 602.6L549.2 597.9" stroke="#413d7b" stroke-width="1.75"/><path d="M544.5 602.5L550.2 608.2M544.5 608.2L550.2 602.5" stroke="#34284f" stroke-width="3.4" opacity="0.25"/><path d="M545.0 603.0L549.8 607.8M545.0 607.8L549.8 603.0" stroke="#34284f" stroke-width="1.75"/><path d="M550.4 599.8L556.1 605.5M550.4 605.5L556.1 599.8" stroke="#2e1f3d" stroke-width="3.4" opacity="0.25"/><path d="M550.9 600.2L555.6 605.0M550.9 605.0L555.6 600.2" stroke="#2e1f3d" stroke-width="1.75"/><path d="M554.9 598.0L560.6 603.8M554.9 603.8L560.6 598.0" stroke="#170d17" stroke-width="3.4" opacity="0.25"/><path d="M555.4 598.5L560.1 603.2M555.4 603.2L560.1 598.5" stroke="#170d17" stroke-width="1.75"/><path d="M557.1 604.9L562.9 610.6M557.1 610.6L562.9 604.9" stroke="#170d17" stroke-width="3.4" opacity="0.25"/><path d="M557.6 605.4L562.4 610.1M557.6 610.1L562.4 605.4" stroke="#170d17" stroke-width="1.75"/><path d="M560.5 596.9L566.2 602.6M560.5 602.6L566.2 596.9" stroke="#3585a5" stroke-width="3.4" opacity="0.25"/><path d="M561.0 597.4L565.8 602.1M561.0 602.1L565.8 597.4" stroke="#3585a5" stroke-width="1.75"/><path d="M566.4 598.5L572.1 604.2M566.4 604.2L572.1 598.5" stroke="#3fb4ad" stroke-width="3.4" opacity="0.25"/><path d="M566.9 599.0L571.6 603.8M566.9 603.8L571.6 599.0" stroke="#3fb4ad" stroke-width="1.75"/><path d="M570.9 598.5L576.6 604.2M570.9 604.2L576.6 598.5" stroke="#3dacab" stroke-width="3.4" opacity="0.25"/><path d="M571.4 599.0L576.1 603.8M571.4 603.8L576.1 599.0" stroke="#3dacab" stroke-width="1.75"/><path d="M578.4 595.8L584.1 601.5M578.4 601.5L584.1 595.8" stroke="#1e1222" stroke-width="3.4" opacity="0.25"/><path d="M578.9 596.2L583.6 601.0M578.9 601.0L583.6 596.2" stroke="#1e1222" stroke-width="1.75"/><path d="M584.5 595.1L590.2 600.9M584.5 600.9L590.2 595.1" stroke="#1e1222" stroke-width="3.4" opacity="0.25"/><path d="M585.0 595.6L589.8 600.4M585.0 600.4L589.8 595.6" stroke="#1e1222" stroke-width="1.75"/><path d="M589.1 596.9L594.9 602.6M589.1 602.6L594.9 596.9" stroke="#1a0f1d" stroke-width="3.4" opacity="0.25"/><path d="M589.6 597.4L594.4 602.1M589.6 602.1L594.4 597.4" stroke="#1a0f1d" stroke-width="1.75"/><path d="M594.9 584.4L600.6 590.1M594.9 590.1L600.6 584.4" stroke="#34284f" stroke-width="3.4" opacity="0.25"/><path d="M595.4 584.9L600.1 589.6M595.4 589.6L600.1 584.9" stroke="#34284f" stroke-width="1.75"/><path d="M594.9 587.8L600.6 593.5M594.9 593.5L600.6 587.8" stroke="#3c508c" stroke-width="3.4" opacity="0.25"/><path d="M595.4 588.2L600.1 593.0M595.4 593.0L600.1 588.2" stroke="#3c508c" stroke-width="1.75"/><path d="M596.0 592.9L601.8 598.6M596.0 598.6L601.8 592.9" stroke="#366ca0" stroke-width="3.4" opacity="0.25"/><path d="M596.5 593.4L601.2 598.1M596.5 598.1L601.2 593.4" stroke="#366ca0" stroke-width="1.75"/><path d="M594.4 598.5L600.1 604.2M594.4 604.2L600.1 598.5" stroke="#3c508c" stroke-width="3.4" opacity="0.25"/><path d="M594.9 599.0L599.6 603.8M594.9 603.8L599.6 599.0" stroke="#3c508c" stroke-width="1.75"/><path d="M590.4 606.0L596.1 611.8M590.4 611.8L596.1 606.0" stroke="#3c508c" stroke-width="3.4" opacity="0.25"/><path d="M590.9 606.5L595.6 611.2M590.9 611.2L595.6 606.5" stroke="#3c508c" stroke-width="1.75"/><path d="M597.1 607.1L602.9 612.9M597.1 612.9L602.9 607.1" stroke="#34284f" stroke-width="3.4" opacity="0.25"/><path d="M597.6 607.6L602.4 612.4M597.6 612.4L602.4 607.6" stroke="#34284f" stroke-width="1.75"/><path d="M539.0 621.8L544.8 627.5M539.0 627.5L544.8 621.8" stroke="#348da7" stroke-width="3.4" opacity="0.25"/><path d="M539.5 622.2L544.2 627.0M539.5 627.0L544.2 622.2" stroke="#348da7" stroke-width="1.75"/><path d="M563.9 626.5L569.6 632.2M563.9 632.2L569.6 626.5" stroke="#366ca0" stroke-width="3.4" opacity="0.25"/><path d="M564.4 627.0L569.1 631.8M564.4 631.8L569.1 627.0" stroke="#366ca0" stroke-width="1.75"/><path d="M569.5 626.5L575.2 632.2M569.5 632.2L575.2 626.5" stroke="#413d7b" stroke-width="3.4" opacity="0.25"/><path d="M570.0 627.0L574.8 631.8M570.0 631.8L574.8 627.0" stroke="#413d7b" stroke-width="1.75"/><path d="M570.9 630.0L576.6 635.8M570.9 635.8L576.6 630.0" stroke="#348da7" stroke-width="3.4" opacity="0.25"/><path d="M571.4 630.5L576.1 635.2M571.4 635.2L576.1 630.5" stroke="#348da7" stroke-width="1.75"/><path d="M441.2 589.1L447.0 594.9M441.2 594.9L447.0 589.1" stroke="#37649d" stroke-width="3.4" opacity="0.25"/><path d="M441.8 589.6L446.5 594.4M441.8 594.4L446.5 589.6" stroke="#37649d" stroke-width="1.75"/><path d="M446.2 592.8L452.0 598.5M446.2 598.5L452.0 592.8" stroke="#3c508c" stroke-width="3.4" opacity="0.25"/><path d="M446.8 593.2L451.5 598.0M446.8 598.0L451.5 593.2" stroke="#3c508c" stroke-width="1.75"/><path d="M391.2 644.2L397.0 650.0M391.2 650.0L397.0 644.2" stroke="#348da7" stroke-width="3.4" opacity="0.25"/><path d="M391.8 644.8L396.5 649.5M391.8 649.5L396.5 644.8" stroke="#348da7" stroke-width="1.75"/><path d="M398.2 640.2L404.0 646.0M398.2 646.0L404.0 640.2" stroke="#37649d" stroke-width="3.4" opacity="0.25"/><path d="M398.8 640.8L403.5 645.5M398.8 645.5L403.5 640.8" stroke="#37649d" stroke-width="1.75"/><path d="M406.2 638.2L412.0 644.0M406.2 644.0L412.0 638.2" stroke="#348da7" stroke-width="3.4" opacity="0.25"/><path d="M406.8 638.8L411.5 643.5M406.8 643.5L411.5 638.8" stroke="#348da7" stroke-width="1.75"/><path d="M402.2 645.2L408.0 651.0M402.2 651.0L408.0 645.2" stroke="#366ca0" stroke-width="3.4" opacity="0.25"/><path d="M402.8 645.8L407.5 650.5M402.8 650.5L407.5 645.8" stroke="#366ca0" stroke-width="1.75"/><path d="M409.2 651.2L415.0 657.0M409.2 657.0L415.0 651.2" stroke="#3ca8ab" stroke-width="3.4" opacity="0.25"/><path d="M409.8 651.8L414.5 656.5M409.8 656.5L414.5 651.8" stroke="#3ca8ab" stroke-width="1.75"/><path d="M409.2 656.2L415.0 662.0M409.2 662.0L415.0 656.2" stroke="#3ca8ab" stroke-width="3.4" opacity="0.25"/><path d="M409.8 656.8L414.5 661.5M409.8 661.5L414.5 656.8" stroke="#3ca8ab" stroke-width="1.75"/><path d="M417.2 638.2L423.0 644.0M417.2 644.0L423.0 638.2" stroke="#3678a2" stroke-width="3.4" opacity="0.25"/><path d="M417.8 638.8L422.5 643.5M417.8 643.5L422.5 638.8" stroke="#3678a2" stroke-width="1.75"/><path d="M422.2 639.2L428.0 645.0M422.2 645.0L428.0 639.2" stroke="#170d17" stroke-width="3.4" opacity="0.25"/><path d="M422.8 639.8L427.5 644.5M422.8 644.5L427.5 639.8" stroke="#170d17" stroke-width="1.75"/><path d="M433.2 640.2L439.0 646.0M433.2 646.0L439.0 640.2" stroke="#348da7" stroke-width="3.4" opacity="0.25"/><path d="M433.8 640.8L438.5 645.5M433.8 645.5L438.5 640.8" stroke="#348da7" stroke-width="1.75"/><path d="M526.5 691.8L532.2 697.5M526.5 697.5L532.2 691.8" stroke="#366ca0" stroke-width="3.4" opacity="0.25"/><path d="M527.0 692.2L531.8 697.0M527.0 697.0L531.8 692.2" stroke="#366ca0" stroke-width="1.75"/><path d="M529.4 694.4L535.1 700.1M529.4 700.1L535.1 694.4" stroke="#366ca0" stroke-width="3.4" opacity="0.25"/><path d="M529.9 694.9L534.6 699.6M529.9 699.6L534.6 694.9" stroke="#366ca0" stroke-width="1.75"/><path d="M532.8 698.6L538.5 704.4M532.8 704.4L538.5 698.6" stroke="#366ca0" stroke-width="3.4" opacity="0.25"/><path d="M533.2 699.1L538.0 703.9M533.2 703.9L538.0 699.1" stroke="#366ca0" stroke-width="1.75"/><path d="M529.4 702.8L535.1 708.5M529.4 708.5L535.1 702.8" stroke="#3ca8ab" stroke-width="3.4" opacity="0.25"/><path d="M529.9 703.2L534.6 708.0M529.9 708.0L534.6 703.2" stroke="#3ca8ab" stroke-width="1.75"/><path d="M530.8 706.9L536.5 712.6M530.8 712.6L536.5 706.9" stroke="#3ca8ab" stroke-width="3.4" opacity="0.25"/><path d="M531.2 707.4L536.0 712.1M531.2 712.1L536.0 707.4" stroke="#3ca8ab" stroke-width="1.75"/><path d="M532.1 713.1L537.9 718.9M532.1 718.9L537.9 713.1" stroke="#3ca8ab" stroke-width="3.4" opacity="0.25"/><path d="M532.6 713.6L537.4 718.4M532.6 718.4L537.4 713.6" stroke="#3ca8ab" stroke-width="1.75"/><path d="M536.9 713.9L542.6 719.6M536.9 719.6L542.6 713.9" stroke="#3ca8ab" stroke-width="3.4" opacity="0.25"/><path d="M537.4 714.4L542.1 719.1M537.4 719.1L542.1 714.4" stroke="#3ca8ab" stroke-width="1.75"/><path d="M541.9 718.0L547.6 723.8M541.9 723.8L547.6 718.0" stroke="#366ca0" stroke-width="3.4" opacity="0.25"/><path d="M542.4 718.5L547.1 723.2M542.4 723.2L547.1 718.5" stroke="#366ca0" stroke-width="1.75"/><path d="M545.9 722.1L551.6 727.9M545.9 727.9L551.6 722.1" stroke="#3fb4ad" stroke-width="3.4" opacity="0.25"/><path d="M546.4 722.6L551.1 727.4M546.4 727.4L551.1 722.6" stroke="#3fb4ad" stroke-width="1.75"/></g>
<g fill="none" stroke="#f5a300" stroke-width="1.2"><circle cx="383" cy="468.6" r="3.3"/><circle cx="412.2" cy="503.4" r="3.3"/><circle cx="451.6" cy="496.1" r="3.3"/><circle cx="447.5" cy="500.2" r="3.3"/><circle cx="489.9" cy="436" r="3.3"/><circle cx="508.6" cy="435.4" r="3.3"/><circle cx="505.8" cy="463.2" r="3.3"/><circle cx="625.4" cy="530.9" r="3.3"/><circle cx="535" cy="716" r="3.3"/><circle cx="539.8" cy="716.7" r="3.3"/></g>
<g fill="#111" font-size="11.6"><text x="383.8" y="468.6" textLength="51.2" lengthAdjust="spacingAndGlyphs">2871937</text><text x="413.0" y="503.4" textLength="51.2" lengthAdjust="spacingAndGlyphs">2871940</text><text x="452.4" y="496.1" textLength="51.2" lengthAdjust="spacingAndGlyphs">2872145</text><text x="448.3" y="500.2" textLength="51.2" lengthAdjust="spacingAndGlyphs">2872142</text><text x="490.7" y="436.0" textLength="51.2" lengthAdjust="spacingAndGlyphs">2872186</text><text x="509.4" y="435.4" textLength="51.2" lengthAdjust="spacingAndGlyphs">2872228</text><text x="506.6" y="463.2" textLength="51.2" lengthAdjust="spacingAndGlyphs">2872197</text><text x="626.2" y="530.9" textLength="51.2" lengthAdjust="spacingAndGlyphs">2872147</text><text x="535.8" y="716.0" textLength="51.2" lengthAdjust="spacingAndGlyphs">2871941</text><text x="540.6" y="716.7" textLength="51.2" lengthAdjust="spacingAndGlyphs">2872201</text></g>
<rect x="337.9" y="406.7" width="387.3" height="333.7" fill="none" stroke="#222" stroke-width="1"/>
<path d="M371.9 740.4v4.2M439.3 740.4v4.2M506.8 740.4v4.2M574.2 740.4v4.2M641.6 740.4v4.2M709.1 740.4v4.2M337.9 686.6h-4.2M337.9 631.6h-4.2M337.9 576.6h-4.2M337.9 521.7h-4.2M337.9 466.8h-4.2M337.9 411.8h-4.2" stroke="#222" stroke-width="1"/>
<g fill="#111" font-size="11.6"><text x="371.9" y="758" text-anchor="middle" textLength="16.9" lengthAdjust="spacingAndGlyphs">−5</text><text x="439.3" y="758" text-anchor="middle" textLength="7.3" lengthAdjust="spacingAndGlyphs">0</text><text x="506.8" y="758" text-anchor="middle" textLength="7.3" lengthAdjust="spacingAndGlyphs">5</text><text x="574.2" y="758" text-anchor="middle" textLength="14.6" lengthAdjust="spacingAndGlyphs">10</text><text x="641.6" y="758" text-anchor="middle" textLength="14.6" lengthAdjust="spacingAndGlyphs">15</text><text x="709.1" y="758" text-anchor="middle" textLength="14.6" lengthAdjust="spacingAndGlyphs">20</text><text x="329" y="690.7" text-anchor="end" textLength="16.9" lengthAdjust="spacingAndGlyphs">−5</text><text x="329" y="635.7" text-anchor="end" textLength="7.3" lengthAdjust="spacingAndGlyphs">0</text><text x="329" y="580.8" text-anchor="end" textLength="7.3" lengthAdjust="spacingAndGlyphs">5</text><text x="329" y="525.8" text-anchor="end" textLength="14.6" lengthAdjust="spacingAndGlyphs">10</text><text x="329" y="470.9" text-anchor="end" textLength="14.6" lengthAdjust="spacingAndGlyphs">15</text><text x="329" y="415.9" text-anchor="end" textLength="14.6" lengthAdjust="spacingAndGlyphs">20</text></g>
<text x="531.5" y="774.6" text-anchor="middle" font-size="11.6" fill="#111" textLength="13.3" lengthAdjust="spacingAndGlyphs">u1</text>
<text transform="translate(305.4 573.4) rotate(-90)" text-anchor="middle" font-size="11.6" fill="#111" textLength="13.3" lengthAdjust="spacingAndGlyphs">u2</text>
<defs><linearGradient id="mk" x1="0" y1="1" x2="0" y2="0"><stop offset="0.0000" stop-color="#0b0405"/><stop offset="0.0312" stop-color="#130a11"/><stop offset="0.0625" stop-color="#1a0f1d"/><stop offset="0.0938" stop-color="#221528"/><stop offset="0.1250" stop-color="#2a1b34"/><stop offset="0.1562" stop-color="#302141"/><stop offset="0.1875" stop-color="#34284f"/><stop offset="0.2188" stop-color="#382e5d"/><stop offset="0.2500" stop-color="#3c356b"/><stop offset="0.2812" stop-color="#403c79"/><stop offset="0.3125" stop-color="#3f4482"/><stop offset="0.3438" stop-color="#3d4d89"/><stop offset="0.3750" stop-color="#3b5691"/><stop offset="0.4062" stop-color="#395f99"/><stop offset="0.4375" stop-color="#37689f"/><stop offset="0.4688" stop-color="#3671a1"/><stop offset="0.5000" stop-color="#367aa2"/><stop offset="0.5312" stop-color="#3583a4"/><stop offset="0.5625" stop-color="#348ca6"/><stop offset="0.5938" stop-color="#3695a8"/><stop offset="0.6250" stop-color="#389ea9"/><stop offset="0.6562" stop-color="#3ba7ab"/><stop offset="0.6875" stop-color="#3eb0ac"/><stop offset="0.7188" stop-color="#42b8ad"/><stop offset="0.7500" stop-color="#52c0ae"/><stop offset="0.7812" stop-color="#63c7af"/><stop offset="0.8125" stop-color="#73ceb0"/><stop offset="0.8438" stop-color="#83d6b1"/><stop offset="0.8750" stop-color="#95dcb8"/><stop offset="0.9062" stop-color="#a7e3c3"/><stop offset="0.9375" stop-color="#b9e9ce"/><stop offset="0.9688" stop-color="#ccefda"/><stop offset="1.0000" stop-color="#def5e5"/></linearGradient></defs>
<rect x="749.5" y="406.7" width="16.7" height="333.7" fill="url(#mk)" stroke="#222" stroke-width="1"/>
<path d="M766.2 737.8h3.9M766.2 691.4h3.9M766.2 644.9h3.9M766.2 598.4h3.9M766.2 552.0h3.9M766.2 505.5h3.9M766.2 459.1h3.9M766.2 412.6h3.9" stroke="#222" stroke-width="1"/>
<g fill="#111" font-size="11.6"><text x="775.3" y="741.9" textLength="7.3" lengthAdjust="spacingAndGlyphs">3</text><text x="775.3" y="695.5" textLength="7.3" lengthAdjust="spacingAndGlyphs">4</text><text x="775.3" y="649.0" textLength="7.3" lengthAdjust="spacingAndGlyphs">5</text><text x="775.3" y="602.5" textLength="7.3" lengthAdjust="spacingAndGlyphs">6</text><text x="775.3" y="556.1" textLength="7.3" lengthAdjust="spacingAndGlyphs">7</text><text x="775.3" y="509.6" textLength="7.3" lengthAdjust="spacingAndGlyphs">8</text><text x="775.3" y="463.2" textLength="7.3" lengthAdjust="spacingAndGlyphs">9</text><text x="775.3" y="416.7" textLength="14.6" lengthAdjust="spacingAndGlyphs">10</text></g>
<text x="668.8" y="399.1" font-size="14.2" fill="#111" textLength="166" lengthAdjust="spacingAndGlyphs">pIC50 (RDKitDescriptor</text>
</svg>
<!--/PLOT-->

<div class="a p" style="left:282.5px;top:796px;line-height:18px;white-space:normal;width:580px">This UMAP is a simplified representation of the chemical complexity of your dataset. If two<br>molecules are very different according to their circular fingerprints, then they are distant in the UMAP<br>and vice versa.<br><br>The molecules selected for explanation are high-lighted in yellow in the molecule ID is shown.<br><br>Note, the exact distance between two clusters is not interpretable and the size of a cluster relative to<br>other cluster sizes is also not interpretable.</div>

<!--TABLE-->
<div class="a th" style="left:955.5px;top:391px;line-height:16px">Molecule Id</div>
<div class="a th" style="left:1361.5px;top:391px;line-height:16px">Performance</div>
<div class="a th" style="left:1479.5px;top:391px;line-height:16px">Cluster size</div>
<div class="a hl" style="top:425px"></div>
<div class="a td" style="left:955.5px;top:438.1px;line-height:16px">id: 2872142</div>
<div class="a td" style="left:1361.5px;top:438.1px;line-height:16px">9.1229</div>
<div class="a td" style="left:1480px;top:438.1px;line-height:16px">7</div>
<div class="a hl" style="top:468.2px"></div>
<div class="a td" style="left:955.5px;top:481.3px;line-height:16px">id: 2872186</div>
<div class="a td" style="left:1361.5px;top:481.3px;line-height:16px">8.6517</div>
<div class="a td" style="left:1480px;top:481.3px;line-height:16px">31</div>
<div class="a hl" style="top:511.4px"></div>
<div class="a td" style="left:955.5px;top:524.5px;line-height:16px">id: 2871937</div>
<div class="a td" style="left:1361.5px;top:524.5px;line-height:16px">8.6416</div>
<div class="a td" style="left:1480px;top:524.5px;line-height:16px">11</div>
<div class="a hl" style="top:554.6px"></div>
<div class="a td" style="left:955.5px;top:567.7px;line-height:16px">id: 2872201</div>
<div class="a td" style="left:1361.5px;top:567.7px;line-height:16px">8.4377</div>
<div class="a td" style="left:1480px;top:567.7px;line-height:16px">53</div>
<div class="a hl" style="top:597.8px"></div>
<div class="a td" style="left:955.5px;top:610.9px;line-height:16px">id: 2872147</div>
<div class="a td" style="left:1361.5px;top:610.9px;line-height:16px">8.4285</div>
<div class="a td" style="left:1480px;top:610.9px;line-height:16px">3</div>
<div class="a hl" style="top:641.0px"></div>
<div class="a td" style="left:955.5px;top:654.1px;line-height:16px">id: 2872228</div>
<div class="a td" style="left:1361.5px;top:654.1px;line-height:16px">8.3143</div>
<div class="a td" style="left:1480px;top:654.1px;line-height:16px">14</div>
<div class="a hl" style="top:684.2px"></div>
<div class="a td" style="left:955.5px;top:697.3px;line-height:16px">id: 2871941</div>
<div class="a td" style="left:1361.5px;top:697.3px;line-height:16px">8.3007</div>
<div class="a td" style="left:1480px;top:697.3px;line-height:16px">13</div>
<div class="a hl" style="top:727.4px"></div>
<div class="a td" style="left:955.5px;top:740.5px;line-height:16px">id: 2872197</div>
<div class="a td" style="left:1361.5px;top:740.5px;line-height:16px">8.2987</div>
<div class="a td" style="left:1480px;top:740.5px;line-height:16px">2</div>
<div class="a hl" style="top:770.6px"></div>
<div class="a td" style="left:955.5px;top:783.7px;line-height:16px">id: 2871940</div>
<div class="a td" style="left:1361.5px;top:783.7px;line-height:16px">8.2720</div>
<div class="a td" style="left:1480px;top:783.7px;line-height:16px">3</div>
<div class="a hl" style="top:813.8px"></div>
<div class="a td" style="left:955.5px;top:826.9px;line-height:16px">id: 2872145</div>
<div class="a td" style="left:1361.5px;top:826.9px;line-height:16px">8.2265</div>
<div class="a td" style="left:1480px;top:826.9px;line-height:16px">4</div>
<div class="a hl" style="top:857.0px;height:2px"></div>
<div class="a" style="left:1052.5px;top:875px;font-size:12.2px;color:#757575;line-height:16px">Page Size:</div>
<div class="a" style="left:1129px;top:875px;font-size:12.65px;color:#757575;line-height:16px">10</div>
<svg class="a" style="left:1169px;top:879px" width="10" height="8" viewBox="0 0 10 8"><path d="M1.5 2.5h7L5 6z" fill="#222"/></svg>
<div class="a" style="left:1233px;top:875px;font-size:12.65px;color:#757575;line-height:16px">1 to 10 of 10</div>
<div class="a" style="left:1415px;top:875px;font-size:12.65px;color:#757575;line-height:16px">Page 1 of 1</div>
<svg class="a" style="left:1354px;top:876px" width="16" height="16" viewBox="0 0 16 16"><path d="M3 4h1.6v8H3z M12 5.2L10.9 4.1 7 8l3.9 3.9L12 10.8 9.2 8z" fill="#222"/></svg>
<svg class="a" style="left:1385px;top:876px" width="16" height="16" viewBox="0 0 16 16"><path d="M10.5 5.2L9.4 4.1 5.5 8l3.9 3.9 1.1-1.1L7.7 8z" fill="#222"/></svg>
<svg class="a" style="left:1493px;top:876px" width="16" height="16" viewBox="0 0 16 16"><path d="M5.5 5.2L6.6 4.1 10.5 8l-3.9 3.9-1.1-1.1L8.3 8z" fill="#222"/></svg>
<svg class="a" style="left:1523px;top:876px" width="16" height="16" viewBox="0 0 16 16"><path d="M11.4 4H13v8h-1.6z M4 5.2L5.1 4.1 9 8l-3.9 3.9L4 10.8 6.8 8z" fill="#222"/></svg>
<!--/TABLE-->

<!--RIGHT-->
<div class="a" id="wf"></div>
<div class="a" style="left:1613.5px;top:154px;font-size:10.2px;font-weight:bold;color:#fff;line-height:13px;letter-spacing:-0.3px">WORKFLOW</div>
<div class="a" style="left:1620px;top:192px;width:16px;height:16px;background:#fff;border-radius:2px;color:#01878a;font-size:12px;font-weight:bold;text-align:center;line-height:16px">1</div>
<div class="a wft" style="left:1651.5px;top:191px;line-height:18px">Check Molecules</div>
<svg class="a" style="left:1786.5px;top:192px" width="16.3" height="16.3" viewBox="0 0 24 24" fill="#fff"><path d="M11 7h2v2h-2zm0 4h2v6h-2zm1-9C6.48 2 2 6.48 2 12s4.48 10 10 10 10-4.48 10-10S17.520 2 12 2zm0 18c-4.41 0-8-3.59-8-8s3.59-8 8-8 8 3.59 8 8-3.59 8-8 8z"/></svg>
<div class="a" style="left:1620px;top:243px;width:16px;height:16px;background:#fff;border-radius:2px;color:#01878a;font-size:12px;font-weight:bold;text-align:center;line-height:16px">2</div>
<div class="a wft" style="left:1651.5px;top:242px;line-height:18px">Check Target Data</div>
<svg class="a" style="left:1786.5px;top:243px" width="16.3" height="16.3" viewBox="0 0 24 24" fill="#fff"><path d="M11 7h2v2h-2zm0 4h2v6h-2zm1-9C6.48 2 2 6.48 2 12s4.48 10 10 10 10-4.48 10-10S17.520 2 12 2zm0 18c-4.41 0-8-3.59-8-8s3.59-8 8-8 8 3.59 8 8-3.59 8-8 8z"/></svg>
<div class="a" style="left:1620px;top:293px;width:16px;height:16px;background:#fff;border-radius:2px;color:#01878a;font-size:12px;font-weight:bold;text-align:center;line-height:16px">3</div>
<div class="a wft" style="left:1651.5px;top:283px;line-height:18px">Featurize and Model<br>Data</div>
<svg class="a" style="left:1786.5px;top:293px" width="16.3" height="16.3" viewBox="0 0 24 24" fill="#fff"><path d="M11 7h2v2h-2zm0 4h2v6h-2zm1-9C6.48 2 2 6.48 2 12s4.48 10 10 10 10-4.48 10-10S17.520 2 12 2zm0 18c-4.41 0-8-3.59-8-8s3.59-8 8-8 8 3.59 8 8-3.59 8-8 8z"/></svg>
<div class="a" style="left:1620px;top:343px;width:16px;height:16px;background:#fff;border-radius:2px;color:#01878a;font-size:12px;font-weight:bold;text-align:center;line-height:16px">4</div>
<div class="a wft" style="left:1651.5px;top:342px;line-height:18px">Explain Model</div>
<svg class="a" style="left:1786.5px;top:343px" width="16.3" height="16.3" viewBox="0 0 24 24" fill="#fff"><path d="M11 7h2v2h-2zm0 4h2v6h-2zm1-9C6.48 2 2 6.48 2 12s4.48 10 10 10 10-4.48 10-10S17.520 2 12 2zm0 18c-4.41 0-8-3.59-8-8s3.59-8 8-8 8 3.59 8 8-3.59 8-8 8z"/></svg>
<div class="a" style="left:1620px;top:394px;width:16px;height:16px;background:#fff;border-radius:2px;color:#01878a;font-size:12px;font-weight:bold;text-align:center;line-height:16px">5</div>
<div class="a wft" style="left:1651.5px;top:393px;line-height:18px">Save Favorite Model</div>
<svg class="a" style="left:1786.5px;top:394px" width="16.3" height="16.3" viewBox="0 0 24 24" fill="#fff"><path d="M11 7h2v2h-2zm0 4h2v6h-2zm1-9C6.48 2 2 6.48 2 12s4.48 10 10 10 10-4.48 10-10S17.520 2 12 2zm0 18c-4.41 0-8-3.59-8-8s3.59-8 8-8 8 3.59 8 8-3.59 8-8 8z"/></svg>
<div class="a" id="aa"></div>
<div class="a" style="left:1613.5px;top:482px;font-size:10.4px;font-weight:bold;color:#cfcfcf;line-height:13px;letter-spacing:-0.1px">ADDITIONAL ACTIONS</div>
<svg class="a" style="left:1618px;top:518px" width="20" height="20" viewBox="0 0 24 24" fill="#e6e6e6"><path d="M12 6v3l4-4-4-4v3c-4.42 0-8 3.58-8 8 0 1.57.46 3.03 1.24 4.26L6.7 14.8c-.45-.83-.7-1.79-.7-2.8 0-3.31 2.69-6 6-6zm6.76 1.74L17.3 9.2c.44.84.7 1.79.7 2.8 0 3.31-2.69 6-6 6v-3l-4 4 4 4v-3c4.42 0 8-3.58 8-8 0-1.57-.46-3.03-1.24-4.26z"/></svg>
<div class="a aat" style="left:1651.5px;top:519px;line-height:18px">Reassign Parameter Type</div>
<svg class="a" style="left:1618px;top:569px" width="20" height="20" viewBox="0 0 24 24" fill="#e6e6e6"><path d="M9.5 1h6.5v6.5h-6.5zM2.5 9.5h6.5v6.5h-6.5zM15.5 16.5h6.5v6.5h-6.5z"/><path d="M5.75 12.75L12.75 4.25M5.75 12.75L18.75 19.75" stroke="#e6e6e6" stroke-width="2" fill="none"/></svg>
<div class="a aat" style="left:1651.5px;top:570px;line-height:18px">Transform Data</div>
<svg class="a" style="left:1618px;top:619px" width="20" height="20" viewBox="0 0 24 24" fill="#e6e6e6"><path d="M4.59 6.89c.7-.71 1.4-1.35 1.71-1.22.5.2 0 1.03-.3 1.52-.25.42-2.86 3.89-2.86 6.31 0 1.28.48 2.34 1.34 2.98.75.56 1.74.73 2.64.46 1.07-.31 1.95-1.4 3.06-2.77 1.210-1.49 2.83-3.44 4.08-3.44 1.63 0 1.65 1.01 1.76 1.79-3.78.64-5.38 3.67-5.38 5.37 0 1.7 1.44 3.09 3.21 3.09 1.63 0 4.29-1.33 4.69-6.1H21v-2.5h-2.47c-.15-1.65-1.09-4.2-4.03-4.2-2.25 0-4.18 1.91-4.94 2.84-.58.73-2.06 2.48-2.29 2.72-.25.3-.68.84-1.11.84-.45 0-.72-.83-.36-1.920.35-1.09 1.4-2.86 1.85-3.52.78-1.14 1.3-1.92 1.3-3.28C8.95 3.69 7.31 3 6.44 3 5.12 3 3.97 4 3.72 4.25c-.36.36-.66.66-.88.93l1.75 1.71zm9.29 11.66c-.31 0-.74-.26-.74-.72 0-.6.73-2.2 2.87-2.76-.3 2.69-1.43 3.48-2.13 3.48z"/></svg>
<div class="a aat" style="left:1651.5px;top:620px;line-height:18px">Generate 3D structures</div>
<svg class="a" style="left:1618px;top:669px" width="20" height="20" viewBox="0 0 24 24" fill="#e6e6e6"><path d="M16.54 11L13 7.46l1.41-1.41 2.12 2.12 4.24-4.24 1.41 1.41L16.54 11zM11 7H2v2h9V7zm10 6.41L19.59 12 17 14.59 14.41 12 13 13.41 15.59 16 13 18.59 14.41 20 17 17.41 19.59 20 21 18.59 18.41 16 21 13.41zM11 15H2v2h9v-2z"/></svg>
<div class="a aat" style="left:1651.5px;top:670px;line-height:18px">Detect Outliers</div>
<svg class="a" style="left:1618px;top:720px" width="20" height="20" viewBox="0 0 24 24" fill="#e6e6e6"><path d="M16.5 3c-1.74 0-3.41.81-4.5 2.09L13.5 9l-3 3 2 4.5L9 12l3-3-1.55-3.9C9.35 3.81 7.78 3 6.5 3 3.42 3 1 5.42 1 8.5c0 3.78 3.4 6.86 8.55 11.54L12 22l2.45-1.96C19.6 15.36 23 12.28 23 8.5 23 5.42 20.58 3 16.5 3z"/></svg>
<div class="a aat" style="left:1651.5px;top:721px;line-height:18px">Remove Favorite Model</div>
<svg class="a" style="left:1618px;top:770px" width="20" height="20" viewBox="0 0 24 24" fill="#e6e6e6"><path d="M6 19c0 1.1.9 2 2 2h8c1.1 0 2-.9 2-2V7H6v12zM19 4h-3.5l-1-1h-5l-1 1H5v2h14V4z"/></svg>
<div class="a aat" style="left:1651.5px;top:771px;line-height:18px">Delete Project</div>
<!--/RIGHT-->

<div class="a" id="bottombar"></div>
</body></html>
